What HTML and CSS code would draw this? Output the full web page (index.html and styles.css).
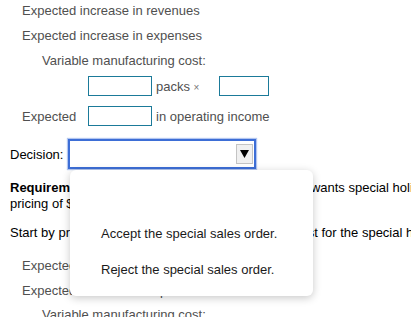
FILE: index.html
```html
<!DOCTYPE html>
<html>
<head>
<meta charset="utf-8">
<link rel="stylesheet" href="styles.css">
</head>
<body>
<div class="page">
  <div class="row ind1 r1">Expected increase in revenues</div>
  <div class="row ind1 r2">Expected increase in expenses</div>
  <div class="row ind2 r2">Variable manufacturing cost:</div>
  <div class="row r4">
    <span class="box b64 first"></span>
    <span class="lbl">packs <span class="times">×</span></span>
    <span class="box b50"></span>
  </div>
  <div class="row ind1 r5">
    <span class="exp">Expected</span>
    <span class="box b64"></span>
    <span class="lbl">in operating income</span>
  </div>
  <div class="decision">
    <span class="dlabel">Decision:</span>
    <div class="select">
      <span class="arrow"><svg width="9" height="8" viewBox="0 0 9 8"><path d="M0 0H9L4.5 8Z" fill="#000"/></svg></span>
    </div>
    <div class="popup">
      <div class="opt"></div>
      <div class="opt">Accept the special sales order.</div>
      <div class="opt">Reject the special sales order.</div>
    </div>
  </div>
  <p class="req"><b>Requirement 1.</b> Suppose Hudson Pottery's reseller wants special holiday pricing of $14 per pack.</p>
  <p class="start">Start by preparing incremental analysis of the request for the special holiday pricing.</p>
  <div class="row ind1 r6">Expected increase in revenues</div>
  <div class="row ind1 r2">Expected increase in expenses</div>
  <div class="row ind2 r7">Variable manufacturing cost:</div>
</div>
</body>
</html>
```
FILE: styles.css
```css
html, body {
  margin: 0;
  padding: 0;
  background: #fff;
  overflow: hidden;
}
body {
  font-family: "Liberation Sans", Arial, sans-serif;
  font-size: 13px;
  color: #000;
}
.page {
  padding-left: 10px;
  width: 600px;
}
.row {
  height: 20px;
  display: flex;
  align-items: center;
  color: #505050;
  white-space: nowrap;
}
.ind1 { padding-left: 12px; }
.ind2 { padding-left: 32px; }
.r1 { margin-top: 0; }
.r2 { margin-top: 5px; }
.r4 { margin-top: 6px; padding-left: 78px; }
.r5 { margin-top: 10px; }
.r6 { margin-top: 14px; }
.r7 { margin-top: 4px; }
.box {
  display: inline-block;
  box-sizing: border-box;
  height: 20px;
  border: 1px solid #1b7a99;
  background: #fff;
}
.b64 { width: 64px; }
.b50 { width: 50px; }
.lbl { margin-left: 4px; }
.times { font-size: 10px; color: #777; margin-right: 20px; }
.exp { width: 66px; }
.decision {
  position: relative;
  margin-top: 13px;
  height: 30px;
  display: flex;
  align-items: center;
}
.dlabel {
  width: 58px;
}
.select {
  box-sizing: border-box;
  width: 188px;
  height: 30px;
  border: 2px solid #3d6ed6;
  box-shadow: 0 0 1px 1px #b3c6f0;
  background: #fff;
  display: flex;
  align-items: center;
  justify-content: flex-end;
  padding-right: 1px;
}
.arrow {
  box-sizing: border-box;
  width: 17px;
  height: 20px;
  background: #f0f0f0;
  border: 1px solid #c4c4c4;
  display: flex;
  align-items: center;
  justify-content: center;
}
.popup {
  position: absolute;
  left: 60px;
  top: 31px;
  width: 243px;
  height: 126px;
  box-sizing: border-box;
  background: #fff;
  border-radius: 6px;
  box-shadow: 0 2px 8px rgba(0, 0, 0, 0.22);
  padding-top: 10px;
  z-index: 2;
}
.opt {
  height: 36px;
  line-height: 36px;
  padding-left: 31px;
  color: #1a1a1a;
  white-space: nowrap;
}
.req {
  margin: 11px 0 0;
  line-height: 16px;
  width: 442px;
}
.start {
  margin: 13px 0 0;
  line-height: 16px;
  white-space: nowrap;
}
```
